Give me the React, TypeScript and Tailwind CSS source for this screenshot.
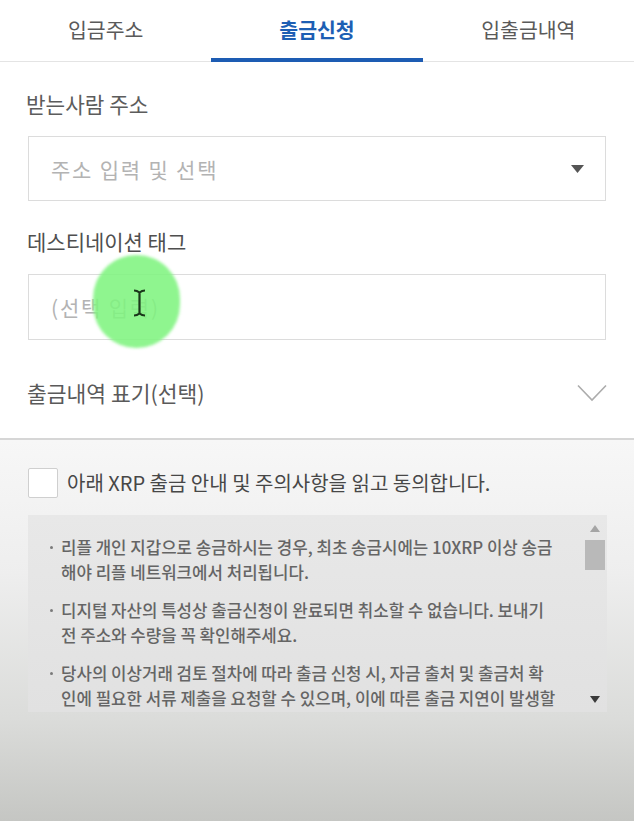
import React from "react";

const tabs = ["입금주소", "출금신청", "입출금내역"];

const bullets: [string, string][] = [
  ["리플 개인 지갑으로 송금하시는 경우, 최초 송금시에는 10XRP 이상 송금", "해야 리플 네트워크에서 처리됩니다."],
  ["디지털 자산의 특성상 출금신청이 완료되면 취소할 수 없습니다. 보내기", "전 주소와 수량을 꼭 확인해주세요."],
  ["당사의 이상거래 검토 절차에 따라 출금 신청 시, 자금 출처 및 출금처 확", "인에 필요한 서류 제출을 요청할 수 있으며, 이에 따른 출금 지연이 발생할"],
];

export default function App() {
  return (
    <div className="relative w-[634px] h-[821px] overflow-hidden flex flex-col bg-white font-['Noto_Sans_CJK_KR','Noto_Sans',sans-serif]">
      {/* top white section */}
      <div className="h-[440px] shrink-0 bg-white border-b-2 border-[#d6d6d6] flex flex-col">
        {/* tabs */}
        <div className="h-[62px] grid grid-cols-3 border-b border-[#e4e4e4]">
          {tabs.map((t, i) => (
            <div key={t} className="relative flex items-center justify-center pb-[3px]">
              <span
                className={
                  i === 1
                    ? "text-[20.5px] leading-[28px] font-bold text-[#1d5fb4]"
                    : "text-[20.5px] leading-[28px] text-[#5a5a5a]"
                }
              >
                {t}
              </span>
              {i === 1 && <div className="absolute left-0 right-0 bottom-[-1px] h-[4px] bg-[#1d5cb3]" />}
            </div>
          ))}
        </div>

        <div className="px-[28px] flex flex-col">
          <div className="mt-[28px] ml-[-2px] text-[21.3px] leading-[28px] text-[#5c5c5c]">받는사람 주소</div>
          <div className="mt-[18px] h-[65px] border border-[#dcdcdc] flex items-center justify-between pl-[22px] pr-[21px]">
            <span className="text-[21px] tracking-[1.8px] leading-[28px] text-[#b3b3b3]">주소 입력 및 선택</span>
            <svg width="13" height="8" viewBox="0 0 13 8">
              <path d="M0 0 H13 L6.5 8 Z" fill="#555" />
            </svg>
          </div>

          <div className="mt-[26px] ml-[-1px] text-[21px] leading-[28px] text-[#4f4f4f]">데스티네이션 태그</div>
          <div className="mt-[19px] h-[66px] border border-[#dcdcdc] flex items-center pl-[22px]">
            <span className="text-[21px] tracking-[1.8px] leading-[28px] text-[#b3b3b3]">(선택 입력)</span>
          </div>

          <div className="mt-[39px] h-[28px] flex items-center justify-between">
            <span className="ml-[-1px] text-[21.5px] leading-[28px] text-[#5a5a5a]">출금내역 표기(선택)</span>
            <svg width="30" height="18" viewBox="0 0 30 18" className="mr-[-1px]">
              <polyline points="1,1.5 15,16 29,1.5" fill="none" stroke="#acacac" strokeWidth="1.6" />
            </svg>
          </div>
        </div>
      </div>

      {/* bottom gray section */}
      <div className="flex-1 px-[28px] pt-[28px] bg-[linear-gradient(180deg,#f7f7f7_0%,#eeeeee_35%,#dbdcda_73%,#c5c6c3_100%)]">
        <div className="h-[30px] flex items-center">
          <div className="w-[30px] h-[30px] bg-white border border-[#cfcfcf] rounded-[2px]" />
          <span className="ml-[9px] text-[20px] leading-[30px] text-[#474747]">
            아래 XRP 출금 안내 및 주의사항을 읽고 동의합니다.
          </span>
        </div>

        <div className="mt-[17px] h-[197px] w-[579px] flex bg-[linear-gradient(180deg,#e8e8e8,#e1e1e1)] overflow-hidden">
          <div className="flex-1 pl-[22px] pt-[20px] flex flex-col gap-[13px] overflow-hidden">
            {bullets.map(([a, b], i) => (
              <div key={i} className="flex">
                <div className="w-[11px] h-[25px] flex items-center shrink-0">
                  <div className="w-[3px] h-[3px] rounded-full bg-[#7a7a7a]" />
                </div>
                <div className="text-[16.8px] leading-[25px] text-[#656565] whitespace-nowrap font-medium">
                  <div>{a}</div>
                  <div>{b}</div>
                </div>
              </div>
            ))}
          </div>
          <div className="w-[24px] shrink-0 flex flex-col items-center">
            <svg width="10" height="7" viewBox="0 0 10 7" className="mt-[10px]">
              <path d="M0 7 L5 0 L10 7 Z" fill="#a5a5a5" />
            </svg>
            <div className="mt-[8px] w-[20px] h-[30px] bg-[#b9b9b9]" />
            <div className="flex-1" />
            <svg width="10" height="7" viewBox="0 0 10 7" className="mb-[9px]">
              <path d="M0 0 H10 L5 7 Z" fill="#3a3a3a" />
            </svg>
          </div>
        </div>
      </div>

      {/* touch indicator overlay */}
      <div className="absolute left-[93px] top-[255px] w-[87px] h-[93px] rounded-full bg-[rgba(128,244,128,0.88)] blur-[1.5px]" />
      <svg className="absolute left-[133px] top-[289px]" width="13" height="28" viewBox="0 0 13 28">
        <path d="M1 1.5 Q4 1.5 6.5 3.5 Q9 1.5 12 1.5 M6.5 3.5 V24.5 M1 26.5 Q4 26.5 6.5 24.5 Q9 26.5 12 26.5" fill="none" stroke="#1a361a" strokeWidth="2.2" />
      </svg>
    </div>
  );
}
